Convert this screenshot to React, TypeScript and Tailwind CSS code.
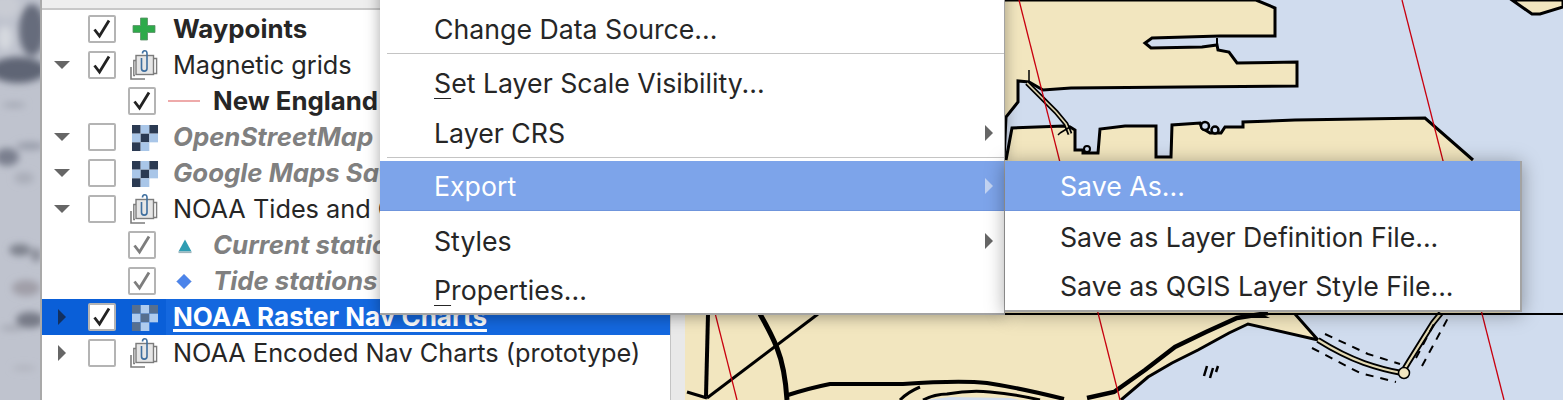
import React from 'react'

type Row = {
  label: string
  depth: number
  arrow?: 'down' | 'right'
  checked: boolean
  icon: 'plus' | 'group' | 'line' | 'raster' | 'triangle' | 'diamond'
  tone: 'bold' | 'normal' | 'muted'
  dimCheck?: boolean
  selected?: boolean
}

const rows: Row[] = [
  { label: 'Waypoints', depth: 0, checked: true, icon: 'plus', tone: 'bold' },
  { label: 'Magnetic grids', depth: 0, arrow: 'down', checked: true, icon: 'group', tone: 'normal' },
  { label: 'New England', depth: 1, checked: true, icon: 'line', tone: 'bold' },
  { label: 'OpenStreetMap', depth: 0, arrow: 'down', checked: false, icon: 'raster', tone: 'muted' },
  { label: 'Google Maps Satellite', depth: 0, arrow: 'down', checked: false, icon: 'raster', tone: 'muted' },
  { label: 'NOAA Tides and Currents', depth: 0, arrow: 'down', checked: false, icon: 'group', tone: 'normal' },
  { label: 'Current stations', depth: 1, checked: true, dimCheck: true, icon: 'triangle', tone: 'muted' },
  { label: 'Tide stations', depth: 1, checked: true, dimCheck: true, icon: 'diamond', tone: 'muted' },
  { label: 'NOAA Raster Nav Charts', depth: 0, arrow: 'right', checked: true, icon: 'raster', tone: 'bold', selected: true },
  { label: 'NOAA Encoded Nav Charts (prototype)', depth: 0, arrow: 'right', checked: false, icon: 'group', tone: 'normal' },
]

function Arrow({ dir, selected }: { dir?: 'down' | 'right'; selected?: boolean }) {
  if (!dir) return <div className="w-[16px] h-[16px]" />
  return (
    <svg width="16" height="16" viewBox="0 0 16 16" className="shrink-0">
      {dir === 'down' ? (
        <path d="M0 4 H16 L8 12 Z" fill="#666666" />
      ) : (
        <path d="M4 0 L12 8 L4 16 Z" fill={selected ? '#12305f' : '#666666'} />
      )}
    </svg>
  )
}

function Checkbox({ checked, dim }: { checked: boolean; dim?: boolean }) {
  return (
    <div className="w-[28px] h-[28px] shrink-0 rounded-[2px] border-2 border-[#b4b4b4] bg-white flex items-center justify-center">
      {checked && (
        <svg width="20" height="20" viewBox="0 0 20 20">
          <path d="M2.5 10.5 L7.5 17 L17 1.5" fill="none" stroke={dim ? '#7d7d7d' : '#222222'} strokeWidth="2.8" />
        </svg>
      )}
    </div>
  )
}

function LayerIcon({ kind, selected }: { kind: Row['icon']; selected?: boolean }) {
  if (kind === 'plus') {
    return (
      <svg width="32" height="32" viewBox="0 0 32 32">
        <path d="M12.5 5 H19.5 V12.5 H27 V19.5 H19.5 V27 H12.5 V19.5 H5 V12.5 H12.5 Z" fill="#2eaa4a" stroke="#5c8f68" strokeWidth="0.8" />
      </svg>
    )
  }
  if (kind === 'group') {
    return (
      <svg width="32" height="32" viewBox="0 0 32 32">
        <path d="M3 18 V30 H17" fill="none" stroke="#7c7c7c" strokeWidth="1.6" />
        <path d="M7 26.5 H5.8 V11.5 H8" fill="none" stroke="#7c7c7c" strokeWidth="1.4" />
        <rect x="8" y="6.5" width="17.5" height="19" fill="#e6e6e6" stroke="#7c7c7c" strokeWidth="1.4" />
        <path d="M26 9.5 H28.6 V24.5 H26" fill="none" stroke="#7c7c7c" strokeWidth="1.4" />
        <path d="M13.5 9 V19.5 C13.5 23 19 23 19 19.5 V4.5 C19 0.5 14.5 1 14.5 4.5" fill="none" stroke="#3f6f9f" strokeWidth="1.6" />
      </svg>
    )
  }
  if (kind === 'line') {
    return (
      <svg width="32" height="32" viewBox="0 0 32 32">
        <rect x="0" y="15" width="32" height="2" fill="#eeaaaa" />
      </svg>
    )
  }
  if (kind === 'raster') {
    const dark = selected ? '#566f8f' : '#2b3a52'
    const light = selected ? '#aecbee' : '#a9c6e8'
    const cells = [dark, light, dark, light, dark, light, dark, light, 'transparent']
    return (
      <svg width="32" height="32" viewBox="0 0 32 32">
        {cells.map((c, i) => (
          <rect key={i} x={4 + (i % 3) * 8.67} y={4 + Math.floor(i / 3) * 8.67} width="8.67" height="8.67" fill={c} />
        ))}
      </svg>
    )
  }
  if (kind === 'triangle') {
    return (
      <svg width="32" height="32" viewBox="0 0 32 32">
        <path d="M17 10.5 L23.5 22.5 H10.5 Z" fill="#2f9db3" />
        <rect x="10.5" y="22.5" width="13" height="1.6" fill="#9fb4bb" />
      </svg>
    )
  }
  return (
    <svg width="32" height="32" viewBox="0 0 32 32">
      <path d="M16 9 L23.5 16.5 L16 24 L8.5 16.5 Z" fill="#4c84ea" stroke="#9bb6e6" strokeWidth="0.6" />
    </svg>
  )
}

function TreeRow({ row }: { row: Row }) {
  const toneClass =
    row.tone === 'bold'
      ? 'font-bold text-[25.8px] text-[#262626]'
      : row.tone === 'muted'
        ? 'font-bold italic text-[25.8px] text-[#808080]'
        : 'text-[25.3px] text-[#262626]'
  return (
    <div className={`h-9 flex items-center pl-[12px] ${row.selected ? 'bg-[#0a5fd8]' : ''}`}>
      <Arrow dir={row.arrow} selected={row.selected} />
      <div className={`shrink-0 ${row.depth === 1 ? 'ml-[58px]' : 'ml-[18px]'}`}>
        <Checkbox checked={row.checked} dim={row.dimCheck} />
      </div>
      <div className="ml-[12px] w-[32px] h-[32px] shrink-0">
        <LayerIcon kind={row.icon} selected={row.selected} />
      </div>
      <div className={`ml-[6px] pl-[7px] flex-1 h-full flex items-center ${row.selected ? 'bg-[#1468df]' : ''}`}>
        <span
          className={`leading-none whitespace-nowrap ${
            row.selected
              ? 'font-bold text-[26px] text-white underline decoration-[3px] underline-offset-[3px]'
              : toneClass
          }`}
        >
          {row.label}
        </span>
      </div>
    </div>
  )
}

function MenuText({ text, mark }: { text: string; mark?: boolean }) {
  if (!mark) return <span>{text}</span>
  return (
    <span>
      <span className="underline decoration-1 underline-offset-[5px]">{text[0]}</span>
      {text.slice(1)}
    </span>
  )
}

function MenuArrow({ active }: { active?: boolean }) {
  return (
    <svg width="10" height="16" viewBox="0 0 10 16" className="absolute right-[10px]">
      <path d="M1 0 L9 8 L1 16 Z" fill={active ? '#c3d4f2' : '#666666'} />
    </svg>
  )
}

function ContextMenu() {
  return (
    <div className="absolute left-[380px] top-[-46px] w-[625px] bg-white flex flex-col border-r border-b-2 border-[#a3a3a3] shadow-[0_2px_14px_rgba(0,0,0,0.35)] text-[26.7px] leading-none text-[#262626]">
      <div className="h-[50px]" />
      <div className="h-[49px] relative flex items-center pl-[54px] pt-[1px]">Change Data Source...</div>
      <div className="h-[5px] ml-[7px] border-t border-[#c4c4c4]" />
      <div className="h-[50px] relative flex items-center pl-[54px]">
        <MenuText text="Set Layer Scale Visibility..." mark />
      </div>
      <div className="h-[49px] relative flex items-center pl-[54px] pt-[1px]">
        Layer CRS
        <MenuArrow />
      </div>
      <div className="h-[4px] ml-[7px] border-t border-[#c4c4c4]" />
      <div className="h-[50px] relative flex items-center pl-[54px] pt-[1px] bg-[#7da4ea] border-b border-[#6f95dc] text-white">
        Export
        <MenuArrow active />
      </div>
      <div className="h-[5px]" />
      <div className="h-[50px] relative flex items-center pl-[54px]">
        Styles
        <MenuArrow />
      </div>
      <div className="h-[47px] relative flex items-center pl-[54px] pt-[2px]">
        <MenuText text="Properties..." mark />
      </div>
    </div>
  )
}

function SubMenu() {
  return (
    <div className="absolute left-[1005px] top-[161px] w-[517px] bg-white flex flex-col border-r-2 border-b-2 border-[#a3a3a3] shadow-[0_2px_18px_rgba(0,0,0,0.35)] text-[26.7px] leading-none text-[#262626]">
      <div className="h-[50px] flex items-center pl-[55px] pt-[1px] bg-[#7da4ea] border-b border-[#6f95dc] text-white">Save As...</div>
      <div className="h-[50px] flex items-center pl-[55px] pt-[2px]">Save as Layer Definition File...</div>
      <div className="h-[49px] flex items-center pl-[55px] pt-[2px]">Save as QGIS Layer Style File...</div>
    </div>
  )
}

function SatelliteStrip() {
  return (
    <svg width="40" height="400" viewBox="0 0 40 400" className="shrink-0 block">
      <defs>
        <filter id="soft" x="-50%" y="-50%" width="200%" height="200%">
          <feGaussianBlur stdDeviation="3.5" />
        </filter>
      </defs>
      <rect width="40" height="400" fill="#bfc3ce" />
      <g filter="url(#soft)">
        <ellipse cx="6" cy="6" rx="14" ry="12" fill="#c9ccd4" />
        <ellipse cx="32" cy="30" rx="13" ry="26" fill="#666c7b" />
        <ellipse cx="18" cy="70" rx="28" ry="13" fill="#5f6574" />
        <ellipse cx="5" cy="38" rx="7" ry="12" fill="#d6d9df" />
        <ellipse cx="14" cy="105" rx="12" ry="3" fill="#a6aab6" />
        <ellipse cx="7" cy="157" rx="12" ry="9" fill="#7a7f8e" />
        <ellipse cx="30" cy="146" rx="14" ry="4" fill="#9a9eab" />
        <ellipse cx="24" cy="178" rx="10" ry="6" fill="#aaaeb9" />
        <ellipse cx="20" cy="250" rx="11" ry="6" fill="#7e828d" />
        <ellipse cx="36" cy="255" rx="5" ry="7" fill="#8a8d98" />
        <ellipse cx="26" cy="288" rx="14" ry="8" fill="#a09fa8" />
        <ellipse cx="30" cy="320" rx="14" ry="8" fill="#777a87" />
        <ellipse cx="12" cy="328" rx="12" ry="3" fill="#a6a9b4" />
        <ellipse cx="24" cy="368" rx="12" ry="3" fill="#b2b5bf" />
      </g>
    </svg>
  )
}

function MapCanvas() {
  return (
    <svg width="878" height="400" viewBox="685 0 878 400" className="block shrink-0">
      <rect x="685" y="0" width="878" height="400" fill="#d0dcee" />
      {/* top land */}
      <path
        d="M685 0 H1256 L1275 8 V36 H1220 L1152 38 L1145 43 L1151 48 L1202 47 L1217 45 L1218 50 L1229 52 L1237 63 L1297 62 V86 L1183 87 L1071 88 L1043 90 L1029 82 L1018 81 V102 L1006 117 L1004 160 H685 Z"
        fill="#f2e6bf"
        stroke="#000"
        strokeWidth="3"
      />
      <path d="M1217 38 V45" stroke="#000" strokeWidth="2" />
      {/* middle land down to the chart edge */}
      <path
        d="M1006 160 L1012 128 L1064 126 L1070 127 L1075 130 V150 H1083 V153 H1098 L1100 129 L1125 126 H1156 V157 H1171 L1172 125 L1200 123 L1202 128 L1210 133 H1221 L1225 127 H1243 V122 L1295 120 L1425 118 L1473 160 L1510 200 V314 H685 V160 Z"
        fill="#f2e6bf"
      />
      <path
        d="M1006 160 L1012 128 L1064 126 L1070 127 L1075 130 V150 H1083 V153 H1098 L1100 129 L1125 126 H1156 V157 H1171 L1172 125 L1200 123 L1202 128 L1210 133 H1221 L1225 127 H1243 V122 L1295 120 L1425 118 L1473 160"
        fill="none"
        stroke="#000"
        strokeWidth="3"
      />
      <circle cx="1205" cy="126" r="4" fill="#d0dcee" stroke="#000" strokeWidth="2.5" />
      <circle cx="1215" cy="130" r="3.5" fill="#d0dcee" stroke="#000" strokeWidth="2.5" />
      <circle cx="1087" cy="149" r="3" fill="#d0dcee" stroke="#000" strokeWidth="2" />
      {/* canal by the menu edge */}
      <path d="M1029 70 V84" fill="none" stroke="#000" strokeWidth="1.5" />
      <path d="M1027 83 L1056 112 L1066 124 L1070 134" fill="none" stroke="#000" strokeWidth="5" />
      <path d="M1027 83 L1056 112 L1066 124 L1070 134" fill="none" stroke="#e3d9b2" strokeWidth="1.6" />
      <path d="M1060 133 L1070 127 M1060 133 L1058 135" fill="none" stroke="#000" strokeWidth="1.5" />
      {/* top right land */}
      <path d="M1512 0 L1532 14 H1540 L1563 7 V0 Z" fill="#f2e6bf" stroke="#000" strokeWidth="3" />
      {/* southern shore */}
      <path
        d="M685 314 H1295 L1318 340 L1248 324 L1229 333 L1198 350 L1172 363 L1148 377 L1121 400 H685 Z"
        fill="#f2e6bf"
      />
      <path d="M1121 400 L1148 377 L1172 363 L1198 350 L1229 333 L1248 324 L1318 340 L1295 314" fill="none" stroke="#000" strokeWidth="3" />
      <path d="M1087 398 L1114 392 L1145 370 L1175 347 L1206 332 L1237 318 L1268 313" fill="none" stroke="#000" strokeWidth="4.5" />
      <path d="M1240 318 H1270 L1262 314 Z" fill="#000" />
      <path d="M1204 376 L1207 366 M1210 378 L1213 368 M1216 372 L1218 366" stroke="#000" strokeWidth="2.5" />
      <path d="M925 400 L950 397 L1010 398 L1020 400 Z" fill="#d0dcee" />
      {/* roads */}
      <g fill="none" stroke="#000" strokeLinejoin="round">
        <path d="M708 314 L706 396" strokeWidth="4" />
        <path d="M760 314 Q772 335 777 348 Q785 368 787 400" strokeWidth="5" />
        <path d="M818 314 L707 398" strokeWidth="3" />
        <path d="M687 392 L707 398" strokeWidth="3" />
        <path d="M788 395 Q810 388 830 384 H903 Q960 380 987 383 Q1020 388 1064 399" strokeWidth="4" />
        <path d="M900 400 Q908 392 920 387" strokeWidth="3" />
        <path d="M923 400 Q935 394 947 394 Q970 390 990 392 Q1015 394 1040 400" strokeWidth="3" />
      </g>
      {/* causeway */}
      <path d="M1318 340 Q1342 355 1364 363 Q1384 370 1402 373 L1408 363 L1433 323 L1441 313" fill="none" stroke="#000" strokeWidth="6" />
      <path d="M1318 340 Q1342 355 1364 363 Q1384 370 1402 373 L1408 363 L1433 323 L1441 313" fill="none" stroke="#e3d9b2" strokeWidth="2.2" />
      <path d="M1325 334 L1368 354 L1400 364 M1312 348 L1360 373 L1396 382 M1416 358 L1436 320 M1422 366 L1448 318" fill="none" stroke="#000" strokeWidth="2" strokeDasharray="8 7" />
      <circle cx="1404" cy="373" r="5.5" fill="#f2e6bf" stroke="#000" strokeWidth="1.5" />
      {/* chart edge */}
      <path d="M1000 314 H1563" stroke="#000" strokeWidth="2" />
      {/* magnetic grid lines */}
      <g stroke="#c8000f" strokeWidth="1.3" fill="none">
        <path d="M1019 0 L1120 400" />
        <path d="M1402 0 L1504 400" />
        <path d="M636 0 L737 400" />
      </g>
    </svg>
  )
}

export default function App() {
  return (
    <div className="relative w-[1563px] h-[400px] overflow-hidden flex bg-white font-['Inter','Noto_Sans',sans-serif]">
      <SatelliteStrip />

      {/* layer tree */}
      <div className="w-[630px] shrink-0 h-full border-l-2 border-[#a9a9a9] flex flex-col">
        <div className="h-[10px] shrink-0 bg-[#eeeeee] border-b-2 border-[#c8c8c8]" />
        <div className="pt-[1px] flex flex-col">
          {rows.map((row) => (
            <TreeRow key={row.label} row={row} />
          ))}
        </div>
      </div>

      {/* splitter */}
      <div className="w-[15px] shrink-0 h-full bg-[#e9e9e9] border-l border-[#c4c4c4]" />

      <MapCanvas />

      <ContextMenu />
      <SubMenu />
    </div>
  )
}
